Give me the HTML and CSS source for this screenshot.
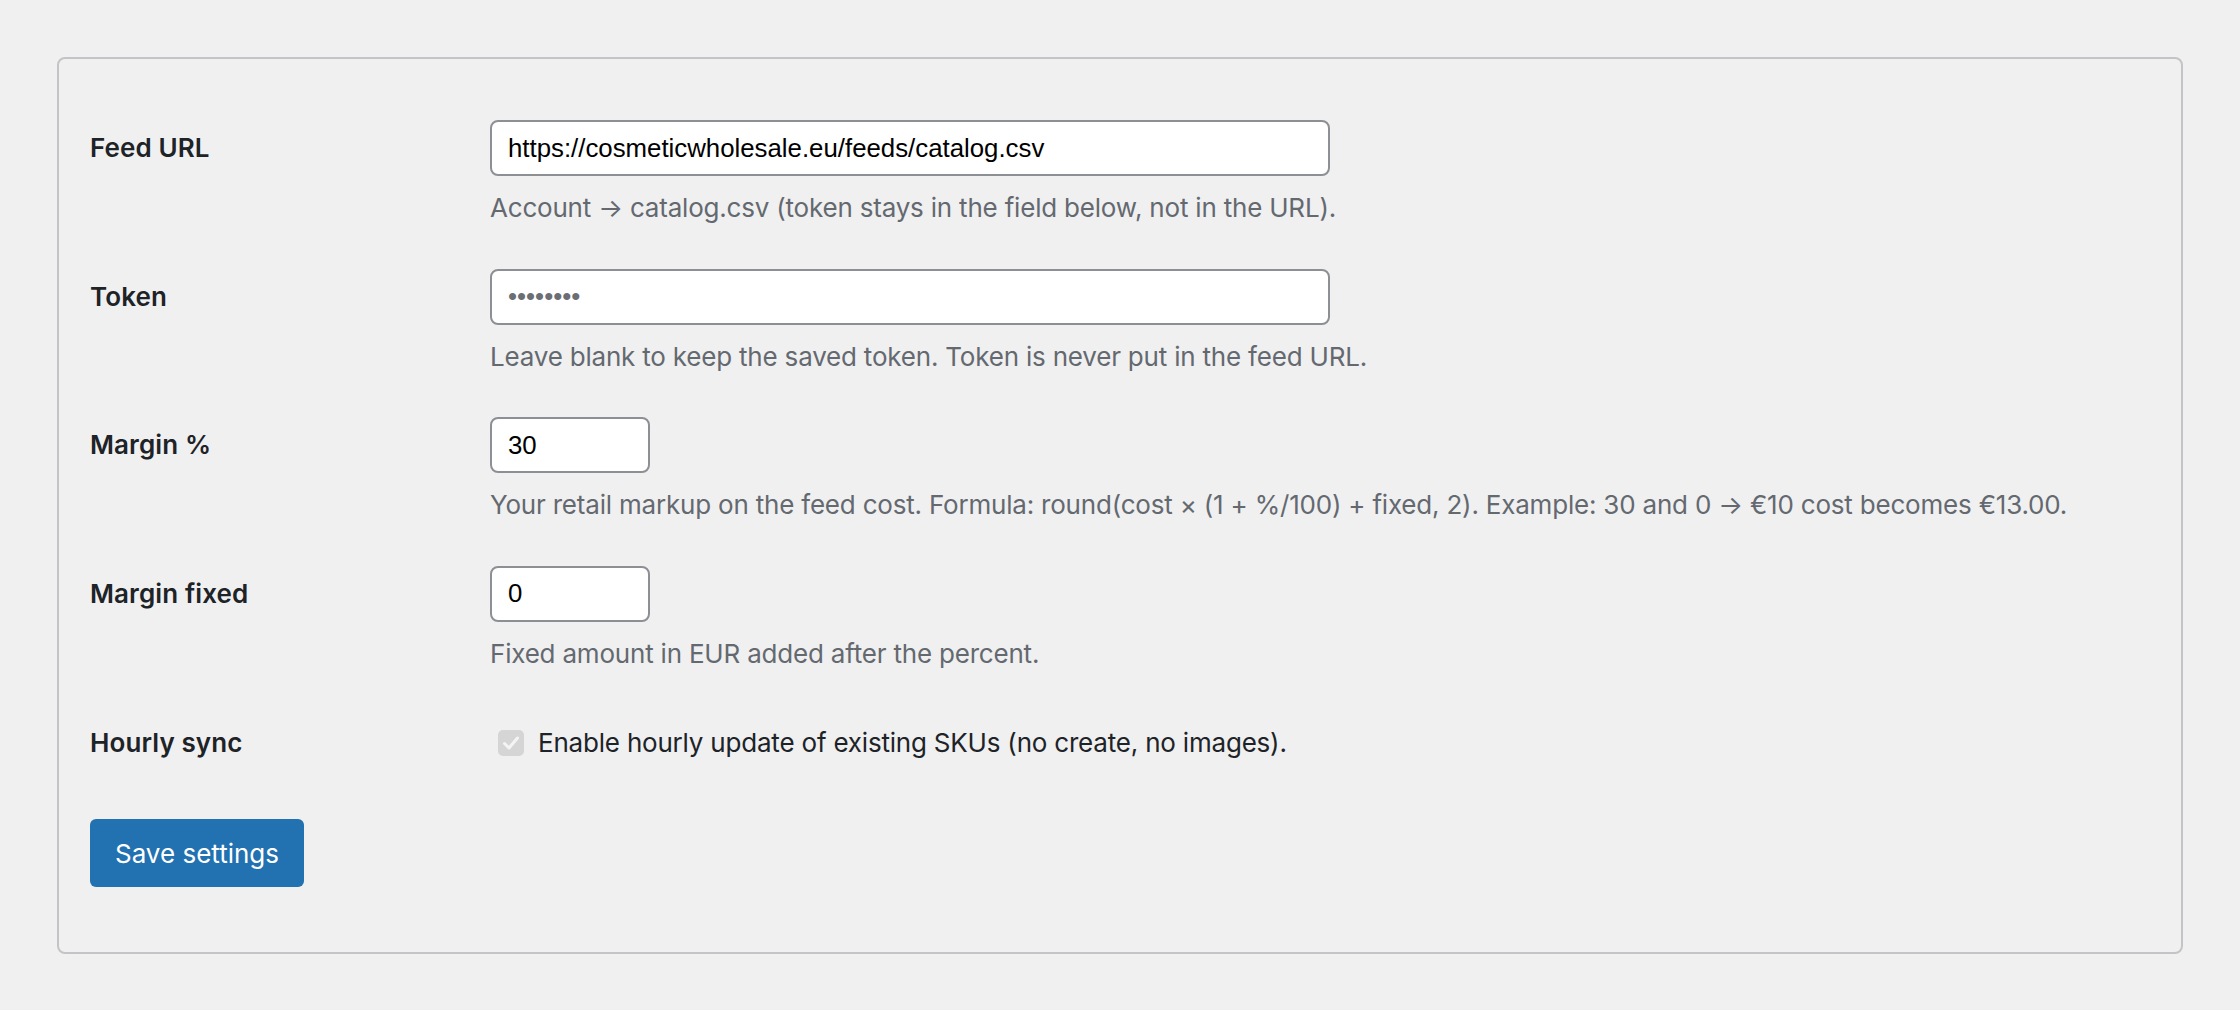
FILE: index.html
```html
<!DOCTYPE html>
<html lang="en">
<head>
<meta charset="utf-8">
<title>Feed settings</title>
<link rel="stylesheet" href="styles.css">
</head>
<body class="page">
  <form class="card">
    <div class="row">
      <label class="row-label" for="feed-url">Feed URL</label>
      <div class="row-field">
        <input id="feed-url" class="text-input wide" type="text" value="https://cosmeticwholesale.eu/feeds/catalog.csv">
        <p class="description">Account → catalog.csv (token stays in the field below, not in the URL).</p>
      </div>
    </div>
    <div class="row">
      <label class="row-label" for="token">Token</label>
      <div class="row-field">
        <input id="token" class="text-input wide" type="password" placeholder="••••••••">
        <p class="description">Leave blank to keep the saved token. Token is never put in the feed URL.</p>
      </div>
    </div>
    <div class="row">
      <label class="row-label" for="margin-pct">Margin %</label>
      <div class="row-field">
        <input id="margin-pct" class="text-input small" type="text" value="30">
        <p class="description">Your retail markup on the feed cost. Formula: round(cost × (1 + %/100) + fixed, 2). Example: 30 and 0 → €10 cost becomes €13.00.</p>
      </div>
    </div>
    <div class="row">
      <label class="row-label" for="margin-fixed">Margin fixed</label>
      <div class="row-field">
        <input id="margin-fixed" class="text-input small" type="text" value="0">
        <p class="description">Fixed amount in EUR added after the percent.</p>
      </div>
    </div>
    <div class="row row-check">
      <span class="row-label">Hourly sync</span>
      <label class="check-field">
        <span class="checkbox" aria-hidden="true">
          <svg viewBox="0 0 26 26" width="26" height="26"><path d="M6.5 13.5 L11 18 L19.5 8" fill="none" stroke="#f4f4f4" stroke-width="3" stroke-linecap="round" stroke-linejoin="round"/></svg>
        </span>
        <span class="check-text">Enable hourly update of existing SKUs (no create, no images).</span>
      </label>
    </div>
    <div class="actions">
      <button type="button" class="btn-primary">Save settings</button>
    </div>
  </form>
</body>
</html>
```
FILE: styles.css
```css
html, body {
  margin: 0;
  padding: 0;
}

.page {
  background: #f0f0f1;
  font-family: Inter, "Noto Sans", "Liberation Sans", sans-serif;
  color: #1d2327;
  padding: 57px 0 0 57px;
  min-height: 1010px;
  box-sizing: border-box;
}

.card {
  width: 2126px;
  box-sizing: border-box;
  border: 2px solid #c3c4c7;
  border-radius: 8px;
  padding: 61px 31px 65px 31px;
  display: flex;
  flex-direction: column;
  gap: 42.67px;
}

.row {
  display: grid;
  grid-template-columns: 400px 1fr;
  align-items: start;
}

.row-label {
  font-size: 26px;
  font-weight: 600;
  line-height: 56px;
  letter-spacing: 0.1px;
  color: #1d2327;
}

.row-field {
  display: flex;
  flex-direction: column;
  align-items: flex-start;
}

.text-input {
  box-sizing: border-box;
  height: 56px;
  border: 2px solid #8c8f94;
  border-radius: 8px;
  background: #fff;
  padding: 0 16px;
  font-family: "Liberation Sans", Arial, sans-serif;
  font-size: 25.8px;
  color: #000;
  margin: 0;
  outline: none;
}

.text-input::placeholder {
  color: #6b6e73;
}

.wide {
  width: 840px;
}

.small {
  width: 160px;
}

.description {
  margin: 14px 0 0 0;
  font-size: 26px;
  line-height: 36px;
  letter-spacing: -0.2px;
  color: #646970;
}

.check-field {
  display: flex;
  align-items: center;
  height: 56px;
  padding-left: 8px;
  gap: 14px;
}

.checkbox {
  width: 26px;
  height: 26px;
  border-radius: 5px;
  background: #d5d5d5;
  display: flex;
  align-items: center;
  justify-content: center;
}

.checkbox svg {
  display: block;
}

.check-text {
  font-size: 26px;
  letter-spacing: -0.2px;
  color: #1d2327;
}

.actions {
  margin-top: 6px;
}

.btn-primary {
  height: 68px;
  width: 214px;
  border: none;
  border-radius: 6px;
  background: #2271b1;
  color: #fff;
  font-family: Inter, "Noto Sans", "Liberation Sans", sans-serif;
  font-size: 26px;
  padding: 0;
  cursor: pointer;
}
```
